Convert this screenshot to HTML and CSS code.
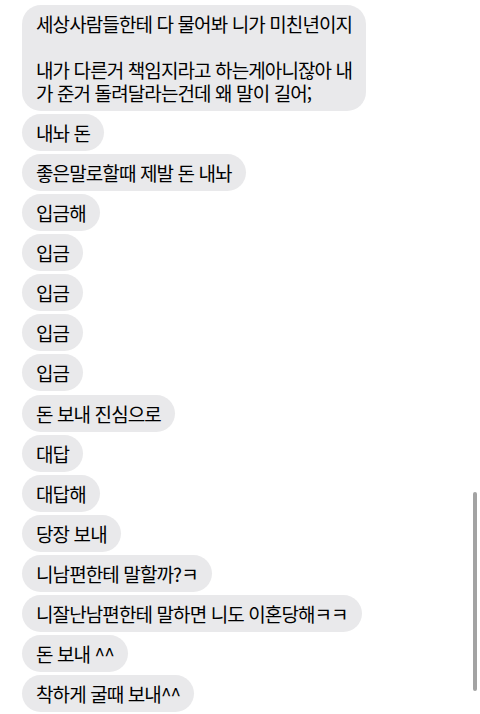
FILE: index.html
```html
<!DOCTYPE html>
<html lang="ko">
<head>
    <meta charset="UTF-8">
    <meta name="viewport" content="width=device-width, initial-scale=1.0">
    <title>메시지</title>
    <link rel="stylesheet" href="styles.css">
</head>
<body>
    <div class="chat">
        <div class="bubble">세상사람들한테 다 물어봐 니가 미친년이지<br><br>내가 다른거 책임지라고 하는게아니잖아 내<br>가 준거 돌려달라는건데 왜 말이 길어;</div>
        <div class="bubble">내놔 돈</div>
        <div class="bubble">좋은말로할때 제발 돈 내놔</div>
        <div class="bubble">입금해</div>
        <div class="bubble">입금</div>
        <div class="bubble">입금</div>
        <div class="bubble">입금</div>
        <div class="bubble">입금</div>
        <div class="bubble">돈 보내 진심으로</div>
        <div class="bubble">대답</div>
        <div class="bubble">대답해</div>
        <div class="bubble">당장 보내</div>
        <div class="bubble">니남편한테 말할까?ㅋ</div>
        <div class="bubble">니잘난남편한테 말하면 니도 이혼당해ㅋㅋ</div>
        <div class="bubble">돈 보내 ^^</div>
        <div class="bubble">착하게 굴때 보내^^</div>
    </div>
    <div class="scroll-indicator"></div>
</body>
</html>
```

FILE: styles.css
```css
html, body {
    margin: 0;
    height: 100%;
    overflow: hidden;
}
body {
    background: #fff;
    font-family: "Noto Sans CJK KR", "Noto Sans", sans-serif;
    color: #000;
    position: relative;
}
.chat {
    display: flex;
    flex-direction: column;
    align-items: flex-start;
    gap: 3.14px;
    padding: 4.5px 0 0 22px;
}
.bubble {
    background: #e9e9eb;
    border-radius: 19px;
    padding: 7px 14px;
    font-size: 19px;
    line-height: 23px;
    letter-spacing: -0.9px;
    white-space: nowrap;
}
.scroll-indicator {
    position: absolute;
    left: 473px;
    top: 492px;
    width: 3.5px;
    height: 199px;
    border-radius: 2px;
    background: #a3a3a3;
}
```
